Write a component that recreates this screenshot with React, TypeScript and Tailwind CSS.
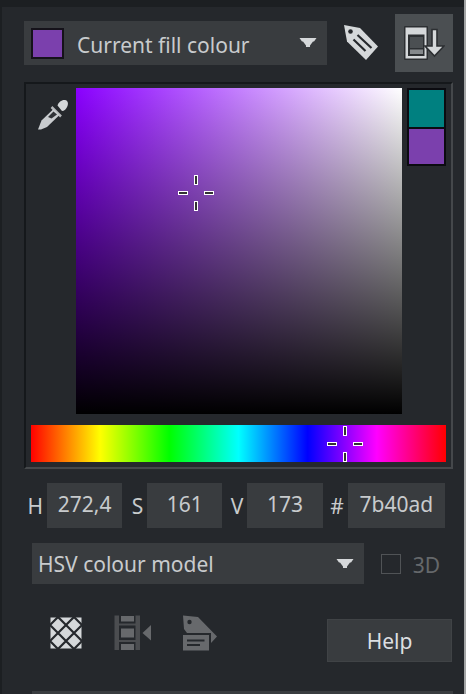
import { useState } from "react";

function Crosshair() {
  const arms = [
    { x: 16, y: 0, w: 4, h: 10 },
    { x: 16, y: 26, w: 4, h: 10 },
    { x: 0, y: 16, w: 10, h: 4 },
    { x: 26, y: 16, w: 10, h: 4 },
  ];
  return (
    <svg width="36" height="36" viewBox="0 0 36 36" className="block" aria-hidden="true">
      {arms.map((a) => (
        <g key={`${a.x}-${a.y}`}>
          <rect x={a.x} y={a.y} width={a.w} height={a.h} fill="#fff" />
          <rect x={a.x + 1} y={a.y + 1} width={a.w - 2} height={a.h - 2} fill="#333" />
        </g>
      ))}
    </svg>
  );
}

function Arrow() {
  return (
    <svg width="18" height="12" viewBox="0 0 18 12" className="block" aria-hidden="true">
      <path d="M0.500 1H17.500L15 4.500H14L11 8.500V10H7V8.500L4 4.500H3Z" fill="#d5d8da" />
    </svg>
  );
}

function TagIcon() {
  return (
    <svg width="36" height="38" viewBox="0 0 36 38" className="block" aria-hidden="true">
      <path d="M1 1L17 4L35 22.500L23 36L4 17.500Z" fill="#d5d8da" />
      <circle cx="7.500" cy="7.500" r="2.300" fill="#25282c" />
      <path d="M14.500 11L28.500 24M10.500 15.500L22.500 27" stroke="#25282c" strokeWidth="2.200" />
    </svg>
  );
}

function DockIcon() {
  return (
    <svg width="42" height="36" viewBox="0 0 42 36" className="block" aria-hidden="true">
      <rect x="1" y="1" width="24" height="34" rx="1" fill="#2c2f32" />
      <rect x="2.500" y="2.500" width="21" height="31" fill="#d5d8da" />
      <rect x="5" y="9.500" width="16.500" height="21.500" fill="#2c2f32" />
      <rect x="7" y="12" width="13" height="11" fill="#4b4f52" />
      <rect x="7" y="24.500" width="13" height="4.500" fill="#85898c" />
      <path d="M29 4.500H34V21H41L31.500 31L22 21H29Z" fill="#d5d8da" stroke="#2c2f32" strokeWidth="1.600" />
    </svg>
  );
}

function DropperIcon() {
  return (
    <svg width="32" height="32" viewBox="0 0 32 32" className="block" aria-hidden="true">
      <path
        d="M20.500 6.500C21.500 3 25 0.500 28 1C31 1.500 31.500 4.500 30.500 7C29.500 10 27 12 25 12Z"
        fill="#d5d8da"
      />
      <path d="M14.500 8L24 17.500" stroke="#b5b8ba" strokeWidth="2.500" />
      <path d="M16.500 10L4.500 21.500L1 30.500L4 30.500L10 28L22.500 16Z" fill="#c9cccf" />
      <path d="M16.500 12.500L11 18L14.500 19.500L20 15.500Z" fill="#303337" />
    </svg>
  );
}

function PatternIcon() {
  return (
    <svg width="32" height="32" viewBox="0 0 32 32" className="block" aria-hidden="true">
      <rect x="0.500" y="0.500" width="31" height="31" fill="#d5d8da" />
      <path
        d="M0 8L8 0M0 24L24 0M8 32L32 8M24 32L32 24M24 0L32 8M8 0L32 24M0 8L24 32M0 24L8 32"
        stroke="#25282c"
        strokeWidth="2.200"
      />
    </svg>
  );
}

function FilmIcon() {
  return (
    <svg width="38" height="36" viewBox="0 0 38 36" className="block" aria-hidden="true">
      <path d="M0.500 0.500H5V35H0.500ZM21.500 0.500H26V35H21.500ZM5 8.500H22V10.500H5ZM5 25H22V27H5Z" fill="#4b4d50" />
      <path d="M7 1H20V6.500H7ZM7 13.500H20V22.500H7ZM7 29H20V35H7Z" fill="#67696c" />
      <path d="M37 10V25.500L28.500 18Z" fill="#67696c" />
    </svg>
  );
}

function LabelIcon() {
  return (
    <svg width="36" height="36" viewBox="0 0 36 36" className="block" aria-hidden="true">
      <path d="M1 0.500L16 2L35 21.500L29 28V18H5L2 14Z" fill="#67696c" />
      <circle cx="7.500" cy="7" r="2.200" fill="#25282c" />
      <rect x="1" y="20" width="26" height="15.500" fill="#67696c" />
      <path d="M5 25.500H22.500M5 30H18" stroke="#25282c" strokeWidth="2" />
    </svg>
  );
}

function Field({
  id,
  label,
  value,
  wide,
}: {
  id: string;
  label: string;
  value: string;
  wide?: boolean;
}) {
  const [text, setText] = useState(value);
  return (
    <div className={wide ? "flex min-w-0 flex-[117]" : "flex min-w-0 flex-[95]"}>
      <label htmlFor={id} className="flex w-5 shrink-0 items-center justify-end pr-1">
        {label}
      </label>
      <input
        id={id}
        value={text}
        onChange={(e) => setText(e.target.value)}
        className="h-[45px] w-full min-w-0 bg-[#393c3f] pb-1 text-center outline-none"
      />
    </div>
  );
}

export default function App() {
  return (
    <main className="min-h-screen border-r-2 border-l-2 border-r-[#a3a5a6] border-l-[#1c1f22] bg-[#25282c] font-['Noto_Sans',sans-serif] text-[21px] leading-7 text-[#c8cbcd]">
      <div className="h-[7px] bg-[#1c1f22]" />
      <div className="pt-[7px] pr-[11px] pl-[22px]">
        <header className="flex items-center">
          <div className="relative flex-1">
            <select
              aria-label="Colour target"
              className="block h-11 w-full appearance-none bg-[#393c3f] pt-1 pl-[53px] outline-none"
            >
              <option>Current fill colour</option>
            </select>
            <span className="pointer-events-none absolute inset-y-0 left-[7px] flex items-center">
              <span className="h-[31px] w-[33px] border-2 border-[#15121a] bg-[#7b40ad]" />
            </span>
            <span className="pointer-events-none absolute inset-y-0 right-2.5 flex items-center">
              <Arrow />
            </span>
          </div>
          <button type="button" aria-label="Colour styles" className="flex w-[68px] justify-center">
            <TagIcon />
          </button>
          <button
            type="button"
            aria-label="Show docker options"
            className="flex size-[58px] items-center justify-center bg-[#4b4f52]"
          >
            <DockIcon />
          </button>
        </header>

        <section className="mt-2.5 border-2 border-t-[#15181b] border-r-[#45484b] border-b-[#45484b] border-l-[#15181b] px-[5px] py-1">
          <div className="flex">
            <div className="w-[45px] shrink-0 pt-[11px] pl-1.5">
              <button type="button" aria-label="Sample colour" className="block">
                <DropperIcon />
              </button>
            </div>
            <div className="relative aspect-square flex-1 bg-linear-to-r/srgb from-[#8a00ff] to-white">
              <div className="absolute inset-0 bg-linear-to-t/srgb from-black to-black/0" />
              <div className="absolute top-[32.3%] left-[36.8%] -translate-1/2">
                <Crosshair />
              </div>
            </div>
            <div className="ml-[5px] w-[39px] shrink-0">
              <div className="h-[39px] border-2 border-b-0 border-[#0b0b10] bg-[#008080]" />
              <div className="h-[39px] border-2 border-[#0b0b10] bg-[#7b40ad]" />
            </div>
          </div>
          <div className="relative mt-[11px] mb-px h-[37px] bg-[linear-gradient(to_right,#f00,#ff0,#0f0,#0ff,#00f,#f0f,#f00)]">
            <div className="absolute top-1/2 left-[75.6%] -translate-1/2">
              <Crosshair />
            </div>
          </div>
        </section>

        <div className="mt-3.5 flex gap-[5px] pr-2 pl-[3px]">
          <Field id="hue" label="H" value="272,4" />
          <Field id="saturation" label="S" value="161" />
          <Field id="value" label="V" value="173" />
          <Field id="hex" label="#" value="7b40ad" wide />
        </div>

        <div className="mt-[15px] flex items-center pr-[13px] pl-2">
          <div className="relative flex-1">
            <select
              aria-label="Colour model"
              className="block h-[41px] w-full appearance-none bg-[#393c3f] pt-px pl-1.5 outline-none"
            >
              <option>HSV colour model</option>
            </select>
            <span className="pointer-events-none absolute inset-y-0 right-2.5 flex items-center">
              <Arrow />
            </span>
          </div>
          <label className="ml-[17px] flex items-center gap-3 text-[#65686b]">
            <input type="checkbox" disabled className="size-5 appearance-none border border-[#505356]" />
            <span className="pt-0.5">3D</span>
          </label>
        </div>

        <footer className="mt-[31px] flex items-start pr-px pl-[26px]">
          <button type="button" aria-label="No colour" className="mt-0.5">
            <PatternIcon />
          </button>
          <button type="button" disabled aria-label="Overprint" className="ml-8">
            <FilmIcon />
          </button>
          <button type="button" disabled aria-label="Edit style" className="ml-[30px]">
            <LabelIcon />
          </button>
          <button
            type="button"
            className="mt-1 ml-auto h-[43px] w-[125px] border border-[#404346] bg-[#393c3f] text-[#dcdfe1]"
          >
            Help
          </button>
        </footer>
        <div className="mt-[29px] ml-2 h-[3px] bg-[#393c3f]" />
      </div>
    </main>
  );
}
